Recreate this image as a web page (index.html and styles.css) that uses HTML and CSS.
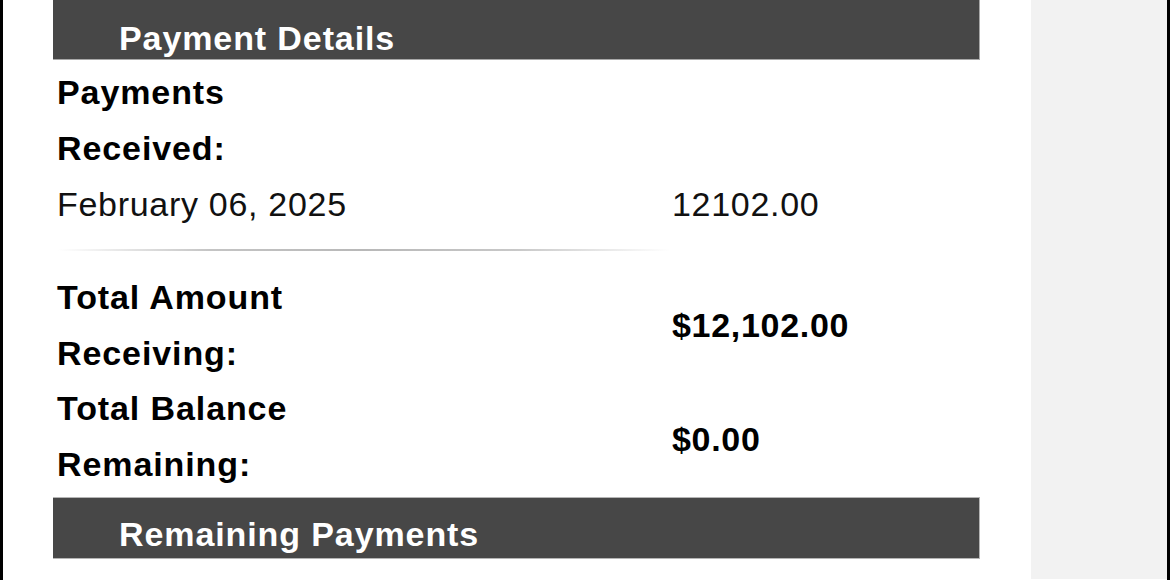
FILE: index.html
```html
<!DOCTYPE html>
<html lang="en">
<head>
<meta charset="utf-8">
<title>Payment Details</title>
<link rel="stylesheet" href="styles.css">
</head>
<body>
<div class="page">
  <main class="main">
    <section class="details">
      <h2 class="bar bar--first">Payment Details</h2>
      <div class="received">
        <div class="label">Payments<br>Received:</div>
        <div class="row">
          <span class="date">February 06, 2025</span>
          <span class="amount">12102.00</span>
        </div>
      </div>
      <div class="separator"></div>
      <div class="total">
        <div class="label">Total Amount<br>Receiving:</div>
        <div class="value">$12,102.00</div>
      </div>
      <div class="total total--balance">
        <div class="label">Total Balance<br>Remaining:</div>
        <div class="value">$0.00</div>
      </div>
      <h2 class="bar bar--second">Remaining Payments</h2>
    </section>
  </main>
  <aside class="side"></aside>
</div>
</body>
</html>
```
FILE: styles.css
```css
html, body {
  margin: 0;
  padding: 0;
  background: #ffffff;
}
body {
  width: 1170px;
  height: 580px;
  overflow: hidden;
  font-family: "Liberation Sans", Arial, Helvetica, sans-serif;
  color: #000;
}
.page {
  display: flex;
  height: 580px;
  border-left: 3px solid #000;
  border-right: 3px solid #000;
  box-sizing: border-box;
}
.main {
  flex: 0 0 1028px;
  padding-left: 50px;
  box-sizing: border-box;
}
.side {
  flex: 0 0 136px;
  background: #f2f2f2;
  height: 579px;
}
.details {
  width: 927px;
}
.bar {
  margin: 0;
  background: #474747;
  color: #fff;
  font-size: 34px;
  font-weight: bold;
  letter-spacing: 0.9px;
  line-height: 40px;
  padding-left: 66px;
  box-sizing: border-box;
}
.bar--first {
  height: 60px;
  padding-top: 18px;
  border-right: 1px solid #a8a8a8;
  border-bottom: 1px solid #a8a8a8;
}
.bar--second {
  height: 62px;
  margin-top: 5px;
  padding-top: 16px;
  border: 1px solid #b5b5b5;
  border-left: none;
}
.label {
  font-size: 34px;
  font-weight: bold;
  letter-spacing: 0.9px;
  line-height: 56px;
  padding-left: 4px;
}
.received {
  padding-top: 4px;
}
.row {
  display: grid;
  grid-template-columns: 615px 1fr;
  font-size: 34px;
  line-height: 56px;
  letter-spacing: 0.7px;
  padding-left: 4px;
  color: #111;
}
.separator {
  margin: 17px 0 18px 5px;
  width: 612px;
  height: 2px;
  background: linear-gradient(to right, rgba(200,200,200,0) 0%, #c4c4c4 25%, #b8b8b8 50%, #c8c8c8 75%, rgba(210,210,210,0) 100%);
}
.total {
  display: grid;
  grid-template-columns: 619px 1fr;
  align-items: center;
}
.value {
  font-size: 34px;
  font-weight: bold;
  letter-spacing: 0.7px;
  line-height: 40px;
}
.total--balance .value {
  padding-top: 6px;
}
.total--balance {
  margin-top: -1px;
}
```
